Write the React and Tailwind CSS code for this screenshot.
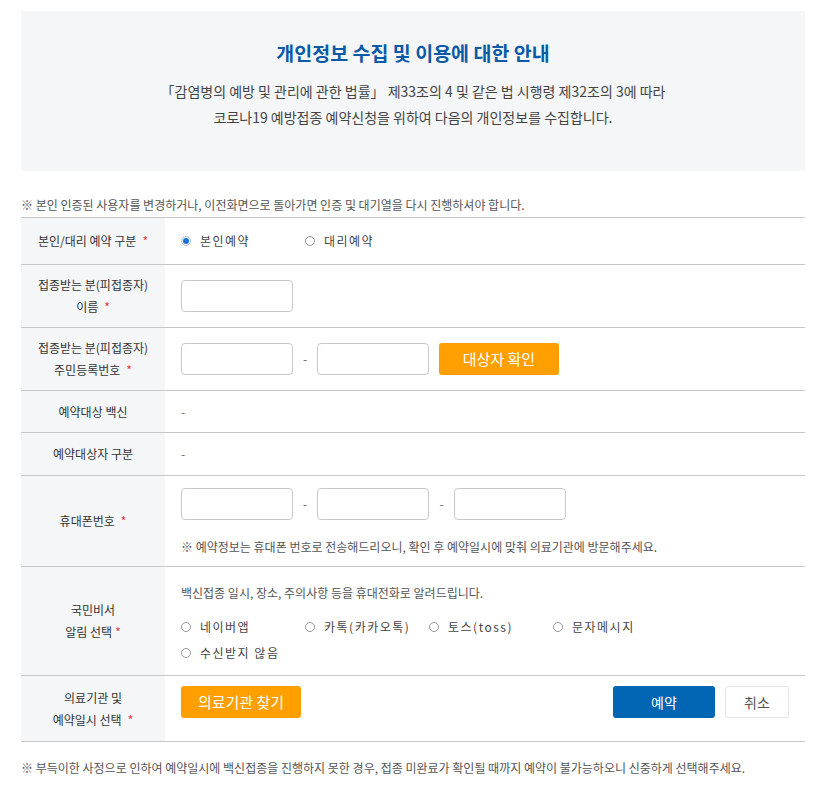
import React from "react";

const font = { fontFamily: '"Noto Sans CJK KR", "Noto Sans", sans-serif' };

const Req = ({ tight }) => (
  <span className={`${tight ? "ml-[3px]" : "ml-[6px]"} text-[#e8383d]`}>*</span>
);

const Radio = ({ checked, label }) => (
  <label className="flex w-[124px] items-center text-[12px] tracking-[1.5px] text-[#444]">
    {checked ? (
      <span className="mr-[9px] flex h-[10px] w-[10px] items-center justify-center rounded-full border border-[#9cc3ea] bg-white">
        <span className="h-[6px] w-[6px] rounded-full bg-[#1a73d9]" />
      </span>
    ) : (
      <span className="mr-[9px] h-[10px] w-[10px] rounded-full border border-[#999] bg-white" />
    )}
    {label}
  </label>
);

const Input = () => (
  <input className="h-[32px] w-[112px] rounded-[4px] border border-[#c9c9c9] bg-white outline-none" />
);

const Dash = ({ w = "w-[24px]" }) => (
  <span className={`${w} text-center text-[12px] text-[#666]`}>-</span>
);

const Row = ({ h, label, children, top = "items-center" }) => (
  <div className={`flex border-b border-[#c8c8c8] ${h}`}>
    <div className="flex w-[144px] shrink-0 items-center justify-center bg-[#f5f6f8] text-center text-[12px] leading-[22px] text-[#333]">
      <div>{label}</div>
    </div>
    <div className={`flex flex-1 pl-[16px] ${top}`}>{children}</div>
  </div>
);

export default function App() {
  return (
    <div className="min-h-screen bg-white pt-[11px]" style={font}>
      <div className="ml-[21px] w-[784px]">
        <div className="flex h-[160px] flex-col items-center bg-[#f5f6f8] pt-[27px]">
          <h2 className="text-[19.5px] font-bold leading-[30px] text-[#0b5aa6]">
            개인정보 수집 및 이용에 대한 안내
          </h2>
          <p className="mt-[10px] text-center text-[14px] leading-[26px] text-[#444]">
            「감염병의 예방 및 관리에 관한 법률」 제33조의 4 및 같은 법 시행령 제32조의 3에 따라
            <br />
            코로나19 예방접종 예약신청을 위하여 다음의 개인정보를 수집합니다.
          </p>
        </div>

        <p className="mt-[26px] text-[12px] leading-[16px] text-[#555]">
          ※ 본인 인증된 사용자를 변경하거나, 이전화면으로 돌아가면 인증 및 대기열을 다시 진행하셔야 합니다.
        </p>

        <div className="mt-[4px] border-t border-[#c8c8c8]">
          <Row
            h="h-[47px]"
            label={
              <>
                본인/대리 예약 구분
                <Req />
              </>
            }
          >
            <Radio checked label="본인예약" />
            <Radio label="대리예약" />
          </Row>

          <Row
            h="h-[63px]"
            label={
              <>
                접종받는 분(피접종자)
                <br />
                이름
                <Req />
              </>
            }
          >
            <Input />
          </Row>

          <Row
            h="h-[63px]"
            label={
              <>
                접종받는 분(피접종자)
                <br />
                주민등록번호
                <Req />
              </>
            }
          >
            <Input />
            <Dash />
            <Input />
            <button className="ml-[10px] h-[32px] w-[120px] rounded-[3px] bg-[#ff9f00] text-[15px] text-white">
              대상자 확인
            </button>
          </Row>

          <Row h="h-[42px]" label="예약대상 백신">
            <span className="text-[12px] text-[#666]">-</span>
          </Row>

          <Row h="h-[43px]" label="예약대상자 구분">
            <span className="text-[12px] text-[#666]">-</span>
          </Row>

          <Row
            h="h-[91px]"
            top="flex-col justify-center"
            label={
              <>
                휴대폰번호
                <Req />
              </>
            }
          >
            <div className="flex items-center">
              <Input />
              <Dash />
              <Input />
              <Dash w="w-[25px]" />
              <Input />
            </div>
            <p className="mt-[19px] text-[12px] leading-[16px] text-[#555]">
              ※ 예약정보는 휴대폰 번호로 전송해드리오니, 확인 후 예약일시에 맞춰 의료기관에 방문해주세요.
            </p>
          </Row>

          <Row
            h="h-[109px]"
            top="flex-col justify-start pt-[18px]"
            label={
              <>
                국민비서
                <br />
                알림 선택
                <Req tight />
              </>
            }
          >
            <p className="text-[12px] leading-[16px] text-[#555]">
              백신접종 일시, 장소, 주의사항 등을 휴대전화로 알려드립니다.
            </p>
            <div className="mt-[18px] flex h-[16px] items-center">
              <Radio label="네이버앱" />
              <Radio label="카톡(카카오톡)" />
              <Radio label="토스(toss)" />
              <Radio label="문자메시지" />
            </div>
            <div className="mt-[10px] flex h-[16px] items-center">
              <Radio label="수신받지 않음" />
            </div>
          </Row>

          <Row
            h="h-[66px]"
            top="items-start pt-[10px]"
            label={
              <>
                의료기관 및
                <br />
                예약일시 선택
                <Req />
              </>
            }
          >
            <button className="h-[32px] w-[120px] rounded-[3px] bg-[#ff9f00] text-[15px] text-white">
              의료기관 찾기
            </button>
            <div className="ml-auto mr-[16px] flex gap-[10px]">
              <button className="h-[32px] w-[102px] rounded-[3px] bg-[#0066b3] text-[14px] text-white">
                예약
              </button>
              <button className="h-[32px] w-[64px] rounded-[3px] border border-[#e5e5e5] bg-white text-[14px] text-[#555]">
                취소
              </button>
            </div>
          </Row>
        </div>

        <p className="mt-[18px] text-[12px] leading-[16px] text-[#555]">
          ※ 부득이한 사정으로 인하여 예약일시에 백신접종을 진행하지 못한 경우, 접종 미완료가 확인될 때까지 예약이 불가능하오니 신중하게 선택해주세요.
        </p>
      </div>
    </div>
  );
}
